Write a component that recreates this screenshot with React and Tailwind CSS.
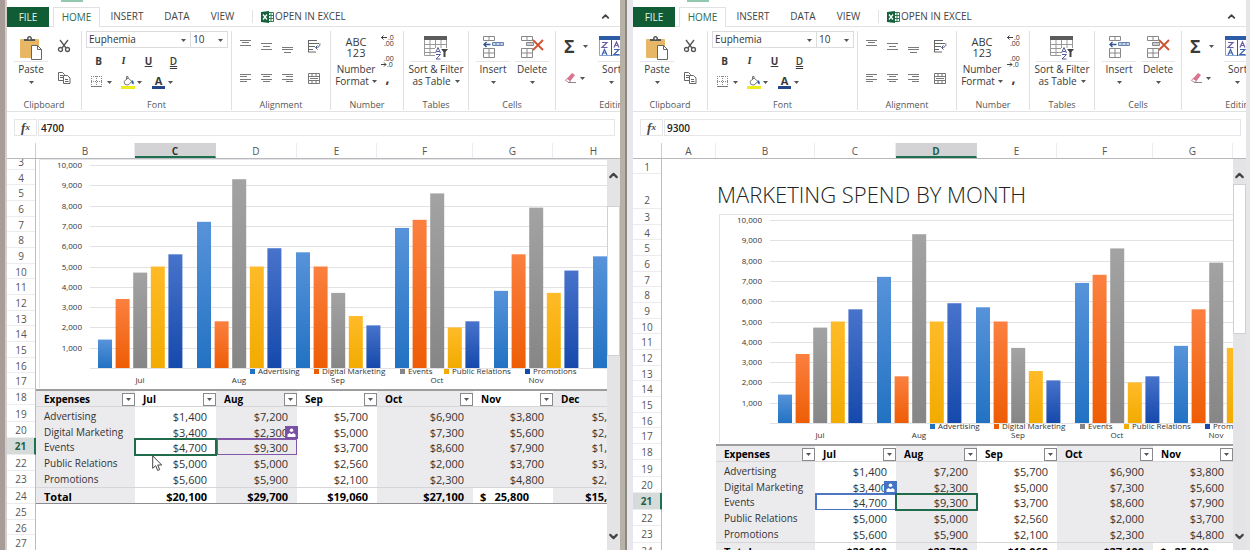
import { ChevronDown, ChevronUp } from 'lucide-react'
import clsx from 'clsx'

const COLUMNS = [
  { id: 'B', width: 'w-[99px]' },
  { id: 'C', width: 'w-[81px]' },
  { id: 'D', width: 'w-[81px]' },
  { id: 'E', width: 'w-[80px]' },
  { id: 'F', width: 'w-[96px]' },
  { id: 'G', width: 'w-[80px]' },
  { id: 'H', width: 'w-[82px]' },
]

const MONTHS = ['Jul', 'Aug', 'Sep', 'Oct', 'Nov', 'Dec']

const SERIES = [
  { name: 'Advertising', values: [1400, 7200, 5700, 6900, 3800, 5500], from: '#5793da', to: '#2272c3', legendX: 214 },
  { name: 'Digital Marketing', values: [3400, 2300, 5000, 7300, 5600, 2300], from: '#fb8040', to: '#ee5d05', legendX: 278 },
  { name: 'Events', values: [4700, 9300, 3700, 8600, 7900, 1900], from: '#a3a3a3', to: '#868686', legendX: 364 },
  { name: 'Public Relations', values: [5000, 5000, 2560, 2000, 3700, 3500], from: '#ffbb28', to: '#f2ab00', legendX: 408 },
  { name: 'Promotions', values: [5600, 5900, 2100, 2300, 4800, 2700], from: '#4873cb', to: '#1549ac', legendX: 489 },
]

const TOTALS = ['$20,100', '$29,700', '$19,060', '$27,100', '25,800', '$15,900']

const money = (n) => `$${n.toLocaleString('en-US')}`

function Caret({ className }) {
  return (
    <svg width="5" height="3" viewBox="0 0 5 3" className={clsx('shrink-0', className)}>
      <path d="M0 0h5L2.500 3z" fill="#555" />
    </svg>
  )
}

function PasteIcon() {
  return (
    <svg width="24" height="24" viewBox="0 0 24 24">
      <rect x="1" y="3" width="19" height="19" rx="1" fill="#e8b765" />
      <path d="M5 5V3h3c0-2 1-3 2.500-3S13 1 13 3h3v2z" fill="#555" />
      <circle cx="10.500" cy="2.500" r="1" fill="#fff" />
      <path d="M12.500 9.500h6l4 4v10h-10z" fill="#fff" stroke="#666" />
      <path d="M18.500 9.500v4h4" fill="none" stroke="#666" />
    </svg>
  )
}

function CutIcon() {
  return (
    <svg width="14" height="14" viewBox="0 0 14 14" fill="none" stroke="#555" strokeWidth="1.300">
      <path d="M3 1l6 8M11 1L5 9" />
      <circle cx="3.500" cy="10.500" r="2" />
      <circle cx="10.500" cy="10.500" r="2" />
    </svg>
  )
}

function CopyIcon() {
  return (
    <svg width="14" height="14" viewBox="0 0 14 14" fill="#fff" stroke="#666">
      <path d="M1.500 1.500h4l2 2v6h-6z" />
      <path d="M3 4.500h3M3 6.500h3" />
      <path d="M6.500 4.500h4l2.500 2.500v5.500H6.500z" />
      <path d="M8 8.500h3M8 10.500h3.500" />
    </svg>
  )
}

function BordersIcon() {
  return (
    <svg width="12" height="12" viewBox="0 0 12 12" fill="none" stroke="#888">
      <path d="M.5 0v11M5.500 0v11M10.500 0v11M0 .5h11M0 5.500h11" strokeDasharray="1 1" />
      <path d="M0 10.500h11" stroke="#777" />
    </svg>
  )
}

function FillIcon() {
  return (
    <svg width="14" height="13" viewBox="0 0 14 13">
      <path d="M3 5.500l4-3.500 4 3.500-4 3.500-3-.5z" fill="#fff" stroke="#777" />
      <path d="M5.500 4V.5h1.500V3" fill="none" stroke="#777" />
      <path d="M11 4c2 1 2 3 1.500 4.500L10.500 7z" fill="#2a5ba8" />
      <rect y="10" width="14" height="3" fill="#ecec1e" />
    </svg>
  )
}

function LinesIcon({ lines }) {
  return (
    <svg width="12" height="16" viewBox="0 0 12 16" stroke="#7a7a7a">
      {lines.map(([x1, x2, y]) => (
        <path key={y} d={`M${x1} ${y + 0.5}H${x2}`} />
      ))}
    </svg>
  )
}

function WrapIcon() {
  return (
    <svg width="14" height="13" viewBox="0 0 14 13" fill="none" stroke="#666">
      <path d="M1 .5h9M1 3.500h11M1 6.500h7M1 9.500h5M1 12h8M1.500 0v12" />
      <path d="M13 3.500c0 3-1.500 4-4 4M10.500 5.500l-2 2 2 2" stroke="#4a5c86" />
    </svg>
  )
}

function MergeIcon() {
  return (
    <svg width="14" height="13" viewBox="0 0 14 13" fill="none" stroke="#777">
      <path d="M1.500 1.500h11v10h-11zM1 4.500h12M1 8.500h12M5 1v3M9 1v3M5 9v3M9 9v3M3 6.500h8" />
    </svg>
  )
}

function DecimalIcon({ increase }) {
  return (
    <svg width="13" height="13" viewBox="0 0 13 13" className="font-['Open_Sans',sans-serif] text-[7px]" fill="#333">
      <text x={increase ? 7 : 3} y="6">{increase ? '.0' : '.00'}</text>
      <text x={increase ? 3 : 6} y="12">{increase ? '.00' : '.0'}</text>
      {increase ? (
        <path d="M0 3.500h6M2.500 1.500l-2 2 2 2" fill="none" stroke="#444" />
      ) : (
        <path d="M0 9.500h5M3 7.500l2 2-2 2" fill="none" stroke="#444" />
      )}
    </svg>
  )
}

function TableIcon() {
  return (
    <svg width="24" height="24" viewBox="0 0 24 24" fill="none" stroke="#999">
      <path d="M.5.5h22v19H.5zM0 8.500h23M0 12.500h23M0 16.500h23M6 1v19M11.500 1v19M17 1v19" />
      <rect width="23" height="4" fill="#5c5c5c" stroke="none" />
      <rect x="11" y="12" width="13" height="12" fill="#fff" stroke="none" />
      <path d="M11.500 17l2.500-5.500 2.500 5.500M12.500 15.500h3M12 18.500h4.500l-4.500 4.500h4.500" stroke="#555a9c" />
      <path d="M17 13h7l-2.500 3v5h-2v-5z" fill="#444" stroke="none" />
    </svg>
  )
}

function InsertIcon() {
  return (
    <svg width="22" height="23" viewBox="0 0 22 23" fill="none" stroke="#888">
      <path d="M1.500.5h11v4h-11zM7 1v3M1.500 12.500h11v9h-11zM7 13v9M1 17h12" />
      <path d="M10.500 6.500h11v3h-11zM14 7v3M18 7v3" fill="#c5d5ec" stroke="#6984ad" />
      <path d="M8.500 8.500H2M4.500 6L2 8.500 4.500 11" stroke="#33568f" strokeWidth="1.400" />
    </svg>
  )
}

function DeleteIcon() {
  return (
    <svg width="24" height="23" viewBox="0 0 24 23" fill="none" stroke="#888">
      <path d="M1.500.5h11v4h-11zM7 1v3M1.500 12.500h11v9h-11zM7 13v9M1 17h12" />
      <path d="M6.500 6.500h7v3h-7z" fill="#c9ced8" />
      <path d="M13 4l10 10M23 4L13 14" stroke="#cf5330" strokeWidth="1.800" />
    </svg>
  )
}

function EraserIcon() {
  return (
    <svg width="14" height="12" viewBox="0 0 14 12">
      <path d="M3 6.500L8 1l3 2-4.500 6z" fill="#dc7390" />
      <path d="M3 6.500L6.500 9l-1.500 1.500L1.500 8.500z" fill="#fff" stroke="#b0586f" strokeWidth=".7" />
      <path d="M4 10.500h8" stroke="#888" />
    </svg>
  )
}

function SortIcon() {
  return (
    <svg width="25" height="21" viewBox="0 0 25 21" fill="none">
      <path d="M.5.5h24v19H.5zM12.500 3v17" fill="#fff" stroke="#8ba4cf" />
      <rect width="25" height="4" fill="#2c5ca6" />
      <path d="M3 6.500h5l-5 5h5.500M15 11.500l2.500-5.500 2.500 5.500M16 9.500h3" stroke="#6d5ba6" strokeWidth="1.200" />
      <path d="M3 19l2.500-5.500L8 19M4 17h3M15 13.500h5l-5 5h5.500" stroke="#3b62ad" strokeWidth="1.200" />
      <path d="M12.500 4v16" stroke="#2c5ca6" />
    </svg>
  )
}

function ExcelIcon() {
  return (
    <svg width="13" height="12" viewBox="0 0 13 12">
      <path d="M7 1.500h5.500v9H7M8 4.500h4M8 7.500h4M10 2v8" fill="#fff" stroke="#2b7a50" />
      <path d="M0 1l8-1v12l-8-1z" fill="#14613b" />
      <path d="M2 3.500l4 5M6 3.500l-4 5" stroke="#fff" strokeWidth="1.300" />
    </svg>
  )
}

function UserBadge({ className }) {
  return (
    <span className={clsx('absolute -right-[2px] -top-[14px] z-10 flex h-[13px] w-[13px] items-center justify-center', className)}>
      <svg width="9" height="9" viewBox="0 0 9 9" fill="#fff">
        <circle cx="4.500" cy="2.200" r="1.800" />
        <path d="M.5 9V6.500L2.500 5l2 1.200L6.500 5l2 1.500V9z" />
      </svg>
    </span>
  )
}

function Tabs() {
  return (
    <nav className="flex h-5 items-stretch border-b border-[#e2e2e4] text-[10px] text-[#444]">
      <button className="-mb-px w-[42px] bg-[#0f5c35] text-[#e4f2e9]">FILE</button>
      <button className="-mb-px ml-1 w-[47px] border-x border-t border-[#e2e2e4] bg-white text-[#2b6b52]">HOME</button>
      <button className="ml-[2px] w-[50px]">INSERT</button>
      <button className="w-[50px]">DATA</button>
      <button className="w-[41px]">VIEW</button>
      <button className="my-[3px] ml-[9px] flex items-center gap-px whitespace-nowrap border-l border-[#e2e2e4] pl-2">
        <ExcelIcon />
        OPEN IN EXCEL
      </button>
      <button aria-label="Collapse ribbon" className="ml-auto mr-[9px]">
        <ChevronUp size={11} strokeWidth={4} />
      </button>
    </nav>
  )
}

function Group({ label, className, children }) {
  return (
    <div className={clsx('flex h-[79px] shrink-0 flex-col border-r border-[#e0e0e3]', className)}>
      <div className="flex flex-1">{children}</div>
      <div className="text-center text-[9px] leading-[10px] text-[#555]">{label}</div>
    </div>
  )
}

function BigButton({ icon, label, caret = 'below', className }) {
  return (
    <button className={clsx('flex flex-col items-center pt-[5px] text-[10px] leading-[12px]', className)}>
      <span className="flex h-[26px] w-full justify-center border-b border-[#e6e6e8]">{icon}</span>
      <span className="mt-px whitespace-nowrap">{label}</span>
      {caret === 'below' ? (
        <Caret className="mt-[6px]" />
      ) : (
        <span className="flex items-center gap-1 whitespace-nowrap">
          {caret}
          <Caret />
        </span>
      )}
    </button>
  )
}

const ALIGN_TOP = [
  { name: 'Top align', lines: [[0, 11, 2], [2, 9, 4], [0, 11, 7]] },
  { name: 'Middle align', lines: [[0, 11, 5], [2, 9, 8], [0, 11, 11]] },
  { name: 'Bottom align', lines: [[0, 11, 9], [0, 11, 11], [2, 9, 14]] },
]
const ALIGN_BOTTOM = [
  { name: 'Align left', lines: [[0, 11, 4], [0, 7, 6], [0, 11, 9], [0, 7, 11]] },
  { name: 'Center', lines: [[0, 11, 4], [2, 9, 6], [0, 11, 9], [2, 9, 11]] },
  { name: 'Align right', lines: [[0, 11, 4], [4, 11, 6], [0, 11, 9], [4, 11, 11]] },
]

function AlignRow({ items, last }) {
  return (
    <div className="flex h-4">
      {items.map((item) => (
        <button key={item.name} aria-label={item.name} className="flex w-[21px] justify-center">
          <LinesIcon lines={item.lines} />
        </button>
      ))}
      <button aria-label="Cell layout" className="flex w-[31px] items-center justify-center">{last}</button>
    </div>
  )
}

function FontPicker({ label, value, className }) {
  return (
    <label className={clsx('relative block', className)}>
      <select
        aria-label={label}
        className="block h-[17px] w-full appearance-none border border-[#dcdcdf] bg-white pl-[2px] text-[10px] leading-[15px] text-[#333]"
      >
        <option>{value}</option>
      </select>
      <Caret className="absolute right-[5px] top-2" />
    </label>
  )
}

function Ribbon() {
  return (
    <div className="flex overflow-hidden border-b border-[#e2e2e4] pb-px pt-1 text-[#3a3a3a]">
      <Group label="Clipboard" className="w-[75px]">
        <BigButton icon={<PasteIcon />} label="Paste" className="ml-[7px] w-[34px]" />
        <div className="ml-[9px] flex flex-col gap-[18px] pt-2">
          <button aria-label="Cut"><CutIcon /></button>
          <button aria-label="Copy"><CopyIcon /></button>
        </div>
      </Group>

      <Group label="Font" className="w-[150px]">
        <div className="flex flex-col gap-[5px] pl-1">
          <div className="flex">
            <FontPicker label="Font name" value="Euphemia" className="w-[105px]" />
            <FontPicker label="Font size" value="10" className="-ml-px w-[38px]" />
          </div>
          <div className="flex h-4 text-[10px] leading-4">
            <button className="w-[25px] font-bold">B</button>
            <button className="w-[25px] font-serif font-bold italic">I</button>
            <button className="w-[25px] font-bold underline">U</button>
            <button className="w-[25px] font-semibold underline decoration-double">D</button>
          </div>
          <div className="flex h-4 items-center pl-[5px]">
            <button aria-label="Borders" className="flex w-[30px] items-center gap-1"><BordersIcon /><Caret /></button>
            <button aria-label="Fill color" className="flex w-[31px] items-center gap-[2px]"><FillIcon /><Caret /></button>
            <button aria-label="Font color" className="flex w-[30px] items-center gap-[3px]">
              <span className="w-[13px] border-b-[3px] border-[#23468c] text-[11px] font-bold leading-[11px]">A</span>
              <Caret />
            </button>
          </div>
        </div>
      </Group>

      <Group label="Alignment" className="w-[99px]">
        <div className="flex flex-col gap-4 pl-[3px] pt-[7px]">
          <AlignRow items={ALIGN_TOP} last={<WrapIcon />} />
          <AlignRow items={ALIGN_BOTTOM} last={<MergeIcon />} />
        </div>
      </Group>

      <Group label="Number" className="w-[73px]">
        <button className="ml-[5px] flex w-10 flex-col items-center pt-[5px] text-[10px] leading-[12px]">
          <span className="text-[11px] leading-[11px]">ABC</span>
          <span className="text-[11px] leading-[11px]">123</span>
          <span className="mt-[5px]">Number</span>
          <span className="flex items-center gap-[3px]">Format <Caret /></span>
        </button>
        <div className="ml-[5px] flex flex-col gap-2 pt-[3px]">
          <button aria-label="Increase decimal"><DecimalIcon increase /></button>
          <button aria-label="Decrease decimal"><DecimalIcon /></button>
          <button aria-label="Comma style" className="text-[14px] font-bold leading-[4px]">,</button>
        </div>
      </Group>

      <Group label="Tables" className="w-[65px]">
        <BigButton icon={<TableIcon />} label="Sort & Filter" caret="as Table" className="ml-[6px] w-[52px]" />
      </Group>

      <Group label="Cells" className="w-[87px]">
        <BigButton icon={<InsertIcon />} label="Insert" className="ml-[7px] w-[34px]" />
        <BigButton icon={<DeleteIcon />} label="Delete" className="ml-[5px] w-[34px]" />
      </Group>

      <Group label="Editing" className="w-[116px]">
        <div className="flex flex-col gap-3 pl-2 pt-[5px]">
          <button aria-label="AutoSum" className="flex h-5 items-center gap-2">
            <span className="text-[18px] font-bold leading-5">Σ</span>
            <Caret />
          </button>
          <button aria-label="Clear" className="flex h-5 items-center gap-[2px]"><EraserIcon /><Caret /></button>
        </div>
        <BigButton icon={<SortIcon />} label="Sort" className="ml-[10px] w-[28px]" />
      </Group>
    </div>
  )
}

function FormulaBar({ value }) {
  return (
    <div className="flex py-[7px] pl-[7px] pr-[5px]">
      <span className="flex h-[17px] w-[23px] items-center justify-center border border-[#e6e6e8] font-['Liberation_Serif',serif] text-[13px] font-bold italic text-[#444]">
        f<span className="text-[9px]">x</span>
      </span>
      <input
        aria-label="Formula"
        defaultValue={value}
        className="ml-px h-[17px] min-w-0 flex-1 border border-[#e6e6e8] bg-white px-[2px] text-[10px] font-semibold text-[#222]"
      />
    </div>
  )
}

function ColumnHeaders({ columns, active, activeText }) {
  return (
    <div className="flex h-4 overflow-hidden border-b border-[#b9b9bc] text-[10px] leading-[16px] text-[#555]">
      <div className="w-[29px] shrink-0 border-r border-[#cfcfd2]" />
      {columns.map((col) => (
        <div
          key={col.id}
          className={clsx(
            'shrink-0 border-r text-center',
            col.width,
            col.id === active
              ? 'border-b-2 border-r-[#d3d3d5] border-b-[#1f7050] bg-[#d3d3d5] font-bold'
              : 'border-[#ececee]',
            col.id === active && activeText,
          )}
        >
          {col.id}
        </div>
      ))}
    </div>
  )
}

function RowNumbers({ from, to, active, className }) {
  const rows = Array.from({ length: to - from + 1 }, (_, i) => from + i)
  return (
    <div className={clsx('grid auto-rows-fr leading-[13px]', className)}>
      {rows.map((n) => (
        <div
          key={n}
          className={clsx(
            'flex items-center justify-center border-b border-[#ececee] pt-[2px]',
            n === active && '-mr-px border-r-2 border-r-[#1f7050] bg-[#d5dbd8] font-bold text-[#1f6048]',
          )}
        >
          {n}
        </div>
      ))}
    </div>
  )
}

const BASELINE = 214
const UNIT = 20.3

function SpendChart() {
  return (
    <svg width="599" height="235" viewBox="0 0 599 235" className="block text-[8px]" fill="#333">
      <defs>
        {SERIES.map((s, i) => (
          <linearGradient key={s.name} id={`bar-${i}`} x1="0" y1="0" x2="0" y2="1">
            <stop offset="0" stopColor={s.from} />
            <stop offset="1" stopColor={s.to} />
          </linearGradient>
        ))}
      </defs>
      <path d="M599 5.500H3.500V234" fill="none" stroke="#e4e4e8" />
      {Array.from({ length: 11 }, (_, k) => {
        const y = Math.round(BASELINE - k * UNIT)
        return (
          <g key={k}>
            <path d={`M54 ${y + 0.5}H599`} stroke="#e2e2e5" />
            {k > 0 && (
              <text x="46" y={y + 3} textAnchor="end">{(k * 1000).toLocaleString('en-US')}</text>
            )}
          </g>
        )
      })}
      {MONTHS.map((month, m) =>
        SERIES.map((s, i) => {
          const h = (s.values[m] / 1000) * UNIT
          return (
            <rect key={month + s.name} x={62 + m * 99 + i * 17.6} y={BASELINE - h} width="14" height={h} fill={`url(#bar-${i})`} />
          )
        }),
      )}
      {MONTHS.map((month, m) => (
        <text key={month} x={104 + m * 99} y="229" textAnchor="middle">{month}</text>
      ))}
      {SERIES.map((s) => (
        <g key={s.name}>
          <rect x={s.legendX} y="215" width="5" height="5" fill={s.to} />
          <text x={s.legendX + 8} y="220">{s.name}</text>
        </g>
      ))}
    </svg>
  )
}

// striped columns, counted from the Expenses column
const isShaded = (col, row) => col % 2 === 0 || (col === 5 && row === 'body')

function SpendTable({ selected, remote }) {
  return (
    <table className="h-[115px] w-[599px] table-fixed border-collapse border-b border-t-2 border-b-[#8c8c8f] border-t-[#9d9da0] text-[11px] leading-[13px] text-[#333]">
      <colgroup>
        {COLUMNS.map((col) => <col key={col.id} className={col.width} />)}
      </colgroup>
      <thead>
        <tr className="border-b border-[#d6d6d9] text-[10px] text-black">
          {['Expenses', ...MONTHS].map((name, c) => (
            <th key={name} className={clsx('p-0 pl-2 pt-[2px] text-left font-bold', isShaded(c, 'head') ? 'bg-[#ebeaed]' : 'bg-white')}>
              <div className="flex items-center justify-between">
                {name}
                <button aria-label={`Filter ${name}`} className="flex h-[13px] w-[13px] items-center justify-center border border-[#8a8a8d] bg-white">
                  <Caret />
                </button>
              </div>
            </th>
          ))}
        </tr>
      </thead>
      <tbody>
        {SERIES.map((s) => (
          <tr key={s.name}>
            <th className="bg-[#ebeaed] p-0 pl-2 pt-[2px] text-left text-[10px] font-normal">{s.name}</th>
            {s.values.map((value, m) => {
              const id = COLUMNS[m + 1].id
              const isEvents = s.name === 'Events'
              return (
                <td key={id} className={clsx('relative p-0 pr-[9px] pt-[2px] text-right', isShaded(m + 1, 'body') ? 'bg-[#ebeaed]' : 'bg-white')}>
                  {money(value)}
                  {isEvents && id === remote.cell && (
                    <span className={clsx('absolute -inset-px left-0 border-2', remote.border)}>
                      <UserBadge className={remote.badge} />
                    </span>
                  )}
                  {isEvents && id === selected && (
                    <span className="absolute -inset-px z-10 border-2 border-[#1f6b4b]" />
                  )}
                  {remote.pointer && s.name === 'Public Relations' && id === 'C' && (
                    <svg width="11" height="17" viewBox="0 0 11 17" className="absolute left-[17px] top-0 z-20">
                      <path d="M.7.8v12.500l3-2.600 2 4.800 2-.9-2-4.600h4z" fill="#fff" stroke="#444" />
                    </svg>
                  )}
                </td>
              )
            })}
          </tr>
        ))}
      </tbody>
      <tfoot>
        <tr className="border-t border-[#d6d6d9] font-bold text-black">
          <th className="bg-[#ebeaed] p-0 pl-2 pt-[2px] text-left">Total</th>
          {TOTALS.map((total, m) => (
            <td key={total} className={clsx('p-0 pt-[2px] text-right', m === 4 ? 'pl-[7px] pr-6' : 'pr-[9px]', isShaded(m + 1, 'foot') ? 'bg-[#ebeaed]' : 'bg-white')}>
              {m === 4 ? <span className="flex justify-between"><span>$</span>{total}</span> : total}
            </td>
          ))}
        </tr>
      </tfoot>
    </table>
  )
}

function ScrollBar({ thumb }) {
  return (
    <div className="flex w-[13px] shrink-0 flex-col items-center bg-[#e4e4e7] text-[#444]">
      <button aria-label="Scroll up" className="mt-[10px] h-3"><ChevronUp size={13} strokeWidth={4} /></button>
      <div className={clsx('h-[150px] w-[13px] border border-[#d0d0d4] bg-white', thumb)} />
      <button aria-label="Scroll down" className="mb-[7px] mt-auto"><ChevronDown size={13} strokeWidth={4} /></button>
    </div>
  )
}

function Workbook({ formula, scrolled, active, activeText, remote, thumb }) {
  const columns = scrolled ? COLUMNS : [{ id: 'A', width: 'w-[54px]' }, ...COLUMNS]
  return (
    <section className="flex min-w-0 flex-1 flex-col overflow-hidden bg-white">
      <div className="h-[7px] pl-[54px]">
        <div className="h-[2px] w-[22px] bg-[#92c8ae]" />
      </div>
      <Tabs />
      <Ribbon />
      <FormulaBar value={formula} />
      <ColumnHeaders columns={columns} active={active} activeText={activeText} />
      <div className="flex min-h-0 flex-1">
        <div className="flex min-w-0 flex-1 overflow-hidden">
          <div className={clsx('w-[29px] shrink-0 border-r border-[#bdbdc0] text-[10px] text-[#555]', scrolled && '-mt-[5px]')}>
            {!scrolled && (
              <>
                <RowNumbers from={1} to={1} className="h-[15px]" />
                <div className="flex h-[35px] items-end justify-center border-b border-[#ececee]">2</div>
              </>
            )}
            <RowNumbers from={3} to={17} className="h-[235px]" />
            <RowNumbers from={18} to={24} active={21} className="h-[115px]" />
            <RowNumbers from={25} to={27} className="h-[47px]" />
          </div>
          <div className={clsx('min-w-0 flex-1', scrolled ? '-mt-[5px]' : 'pl-[54px]')}>
            {!scrolled && (
              <h1 className="flex h-[50px] items-end whitespace-nowrap pl-px text-[22px] font-light leading-[30px] text-[#222]">
                MARKETING SPEND BY MONTH
              </h1>
            )}
            <SpendChart />
            <SpendTable selected={active} remote={remote} />
          </div>
        </div>
        <ScrollBar thumb={thumb} />
      </div>
    </section>
  )
}

export default function App() {
  return (
    <main className="flex h-screen overflow-hidden font-['Open_Sans',sans-serif]">
      <div className="w-[7px] shrink-0 border-r-2 border-[#d3cecc] bg-[#a89c98]" />
      <Workbook
        formula="4700"
        scrolled
        active="C"
        activeText="text-[#333]"
        thumb="mt-[25px]"
        remote={{ cell: 'D', border: 'border-[#8257ab]', badge: 'bg-[#7a4fa6]', pointer: true }}
      />
      <div className="w-[7px] shrink-0 border-r-2 border-[#8d897f] bg-[#b6b2a8]" />
      <div className="w-[6px] shrink-0 bg-[#e8e7ee]" />
      <Workbook
        formula="9300"
        active="D"
        activeText="text-[#1f6048]"
        thumb="mt-[3px]"
        remote={{ cell: 'C', border: 'border-[#4c75c4]', badge: 'bg-[#4472c4]' }}
      />
      <div className="w-1 shrink-0 bg-[#e6e6ea]" />
    </main>
  )
}
